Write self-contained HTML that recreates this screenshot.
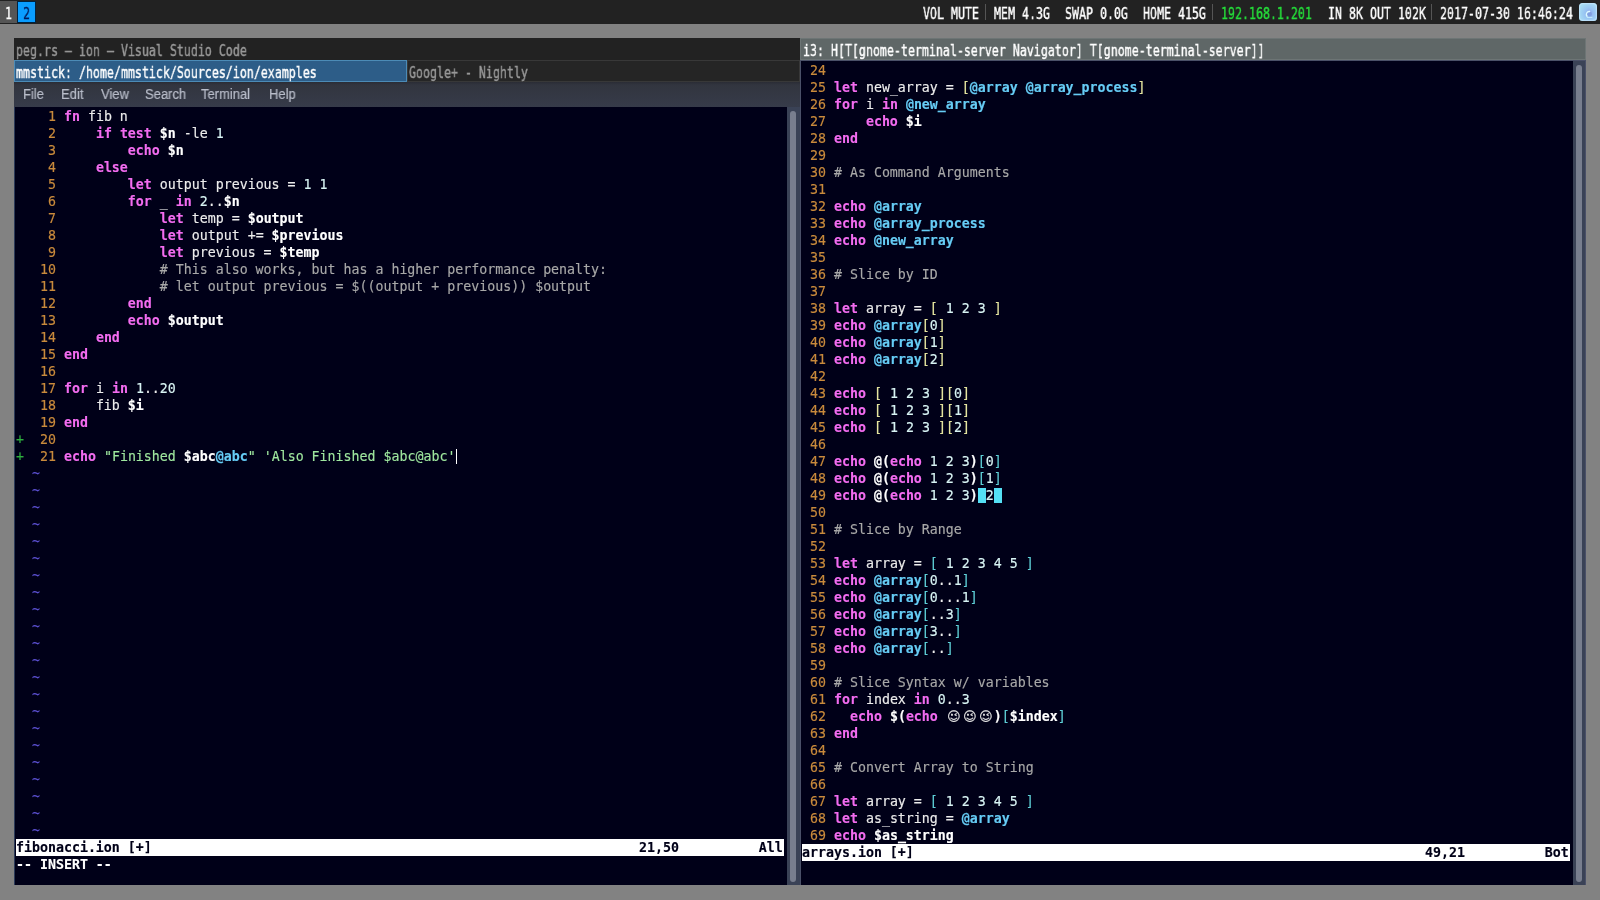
<!DOCTYPE html>
<html><head><meta charset="utf-8"><title>i3</title>
<style>
*{margin:0;padding:0;box-sizing:border-box}
html,body{width:1600px;height:900px;overflow:hidden;background:#828282}
body{position:relative;font-family:"Liberation Mono","DejaVu Sans Mono",monospace}
.abs{position:absolute}
#bar{position:absolute;left:0;top:0;width:1600px;height:24px;background:#222}
.ws{position:absolute;top:1px;height:22px;font-family:"DejaVu Sans Mono","Liberation Mono",monospace;font-size:15.09px;line-height:26px;text-align:center;-webkit-text-stroke:.4px currentColor}
.ws span{display:inline-block;transform:scaleX(.7705);will-change:transform}
#ws1{left:0;width:17px;background:#555;color:#fff}
#ws2{left:17px;width:19px;background:#0a9dff;color:#001a5a;border:1px solid #00223f}
#ws2{line-height:24px}
.bt,.tt{position:absolute;white-space:pre;font-family:"DejaVu Sans Mono","Liberation Mono",monospace;font-size:15.09px;transform-origin:0 50%;transform:scaleX(.7705);-webkit-text-stroke:.4px currentColor;will-change:transform}
.bt{height:24px;line-height:29px}
.tt{height:22px;line-height:26px}
.sep{position:absolute;top:4px;width:1px;height:16px;background:#555}
#tray{position:absolute;left:1579px;top:3px;width:18px;height:18px}
.title{position:absolute;height:22px}
.term{position:absolute;background:#000018;overflow:hidden;will-change:transform;-webkit-text-stroke:.15px currentColor;font-family:"DejaVu Sans Mono","Liberation Mono",monospace;font-size:13.288px;color:#ececec}
.r{position:absolute;left:0;height:17px;line-height:17px;white-space:pre}
#lt .r{left:2px}
#lt{box-shadow:inset 1px 0 #2b3a58}
#rt .r{left:1px}
.k{color:#f36cf0;font-weight:bold}
.v{color:#fff;font-weight:bold}
.a{color:#66ccf5;font-weight:bold}
.c{color:#a8a8a8}
.s{color:#9fe89f}
.n{color:#d8f4f4}
.y{color:#e6e6a0}
.t{color:#5fd0d8}
.ln{color:#c98a3c}
.sg{color:#2fae3f}
.tl{color:#5a4fcf}
.st{background:#fff;color:#000018;font-weight:bold}
.mp{background:#55e0f5;color:#55e0f5}
.em{display:inline-block;width:16px;text-align:center;font-family:"DejaVu Sans",sans-serif;font-size:13px;color:#e6e6e6;vertical-align:top;height:17px;line-height:17px;overflow:hidden}
.cur{position:absolute;width:1px;height:15px;background:#fff}
.sb{position:absolute;background:#3a4256}
.sb i{position:absolute;left:3px;width:6px;top:4px;bottom:3px;background:#787e8e;border-radius:3px}
.menu{position:absolute;left:14px;top:82px;width:786px;height:25px;background:linear-gradient(#2a2c35 0,#32353f 3px,#363b4a 100%);font-family:"Liberation Sans","DejaVu Sans",sans-serif;font-size:13px;color:#b9bdca}
.menu span{position:absolute;top:0;line-height:25px;font-size:13.8px;transform:scaleX(.94);transform-origin:0 50%;will-change:transform;-webkit-text-stroke:.2px currentColor}
</style></head><body>
<div id="bar">
<div class="ws" id="ws1"><span>1</span></div>
<div class="ws" id="ws2"><span>2</span></div>
<div class="bt" style="left:923px;top:0px;color:#fff">VOL MUTE</div>
<div class="bt" style="left:994px;top:0px;color:#fff">MEM 4.3G</div>
<div class="bt" style="left:1065px;top:0px;color:#fff">SWAP 0.0G</div>
<div class="bt" style="left:1143px;top:0px;color:#fff">HOME 415G</div>
<div class="bt" style="left:1221px;top:0px;color:#25de3a">192.168.1.201</div>
<div class="bt" style="left:1328px;top:0px;color:#fff">IN 8K OUT 102K</div>
<div class="bt" style="left:1440px;top:0px;color:#fff">2017-07-30 16:46:24</div>
<div class="sep" style="left:985px"></div>
<div class="sep" style="left:1212px"></div>
<div class="sep" style="left:1431px"></div>
<div id="tray"><svg width="18" height="18" viewBox="0 0 18 18"><defs><radialGradient id="tg" cx="0.58" cy="0.58" r="0.6"><stop offset="0" stop-color="#8ea8ea"/><stop offset=".45" stop-color="#98c4f2"/><stop offset="1" stop-color="#a6dcf4"/></radialGradient></defs><rect x="0" y="0" width="18" height="18" rx="3.5" fill="url(#tg)"/><rect x=".6" y=".6" width="16.8" height="16.8" rx="3" fill="none" stroke="#cdeaff" stroke-opacity=".55" stroke-width="1.2"/><path d="M9.3 5.6L12.6 9.4L9.6 9.6z" fill="#9fb4f2" fill-opacity=".7"/><circle cx="10.4" cy="10.9" r="2.5" fill="#7f9cde" fill-opacity=".85"/><path d="M10.6 8.5A2.9 2.9 0 0 0 8 13.2" fill="none" stroke="#dcfaff" stroke-width="1.4" stroke-linecap="round"/><path d="M8.2 14.4h4.8" stroke="#c4ecfc" stroke-width="1" stroke-linecap="round"/></svg></div>
</div>

<!-- left window -->
<div class="title" style="left:14px;top:38px;width:786px;background:#222"></div>
<div class="tt" style="left:16px;top:38px;color:#999">peg.rs — ion — Visual Studio Code</div>
<div class="title" style="left:14px;top:60px;width:393px;background:#2d5d88;border:1px solid #4c8bb6"></div>
<div class="tt" style="left:16px;top:60px;color:#fff">mmstick: /home/mmstick/Sources/ion/examples</div>
<div class="title" style="left:407px;top:60px;width:393px;background:#252525;border:1px solid #383838"></div>
<div class="tt" style="left:409px;top:60px;color:#999">Google+ - Nightly</div>
<div class="menu"><span style="left:9px">File</span><span style="left:46.5px">Edit</span><span style="left:86.5px">View</span><span style="left:130.5px">Search</span><span style="left:186.5px">Terminal</span><span style="left:254.5px">Help</span></div>
<div class="term" id="lt" style="left:14px;top:107px;width:773px;height:778px">
<div class="r " style="top:1px;">  <span class="ln">  1</span> <span class="k">fn</span> fib n</div>
<div class="r " style="top:18px;">  <span class="ln">  2</span>     <span class="k">if</span> <span class="k">test</span> <span class="v">$n</span> -le <span class="n">1</span></div>
<div class="r " style="top:35px;">  <span class="ln">  3</span>         <span class="k">echo</span> <span class="v">$n</span></div>
<div class="r " style="top:52px;">  <span class="ln">  4</span>     <span class="k">else</span></div>
<div class="r " style="top:69px;">  <span class="ln">  5</span>         <span class="k">let</span> output previous = <span class="n">1</span> <span class="n">1</span></div>
<div class="r " style="top:86px;">  <span class="ln">  6</span>         <span class="k">for</span> _ <span class="k">in</span> <span class="n">2</span>..<span class="v">$n</span></div>
<div class="r " style="top:103px;">  <span class="ln">  7</span>             <span class="k">let</span> temp = <span class="v">$output</span></div>
<div class="r " style="top:120px;">  <span class="ln">  8</span>             <span class="k">let</span> output += <span class="v">$previous</span></div>
<div class="r " style="top:137px;">  <span class="ln">  9</span>             <span class="k">let</span> previous = <span class="v">$temp</span></div>
<div class="r " style="top:154px;">  <span class="ln"> 10</span>             <span class="c"># This also works, but has a higher performance penalty:</span></div>
<div class="r " style="top:171px;">  <span class="ln"> 11</span>             <span class="c"># let output previous = $((output + previous)) $output</span></div>
<div class="r " style="top:188px;">  <span class="ln"> 12</span>         <span class="k">end</span></div>
<div class="r " style="top:205px;">  <span class="ln"> 13</span>         <span class="k">echo</span> <span class="v">$output</span></div>
<div class="r " style="top:222px;">  <span class="ln"> 14</span>     <span class="k">end</span></div>
<div class="r " style="top:239px;">  <span class="ln"> 15</span> <span class="k">end</span></div>
<div class="r " style="top:256px;">  <span class="ln"> 16</span> </div>
<div class="r " style="top:273px;">  <span class="ln"> 17</span> <span class="k">for</span> i <span class="k">in</span> <span class="n">1</span>..<span class="n">20</span></div>
<div class="r " style="top:290px;">  <span class="ln"> 18</span>     fib <span class="v">$i</span></div>
<div class="r " style="top:307px;">  <span class="ln"> 19</span> <span class="k">end</span></div>
<div class="r " style="top:324px;"><span class="sg">+</span> <span class="ln"> 20</span> </div>
<div class="r " style="top:341px;"><span class="sg">+</span> <span class="ln"> 21</span> <span class="k">echo</span> <span class="s">"Finished </span><span class="v">$abc</span><span class="a">@abc</span><span class="s">"</span> <span class="s">'Also Finished $abc@abc'</span></div>
<div class="r " style="top:358px;">  <span class="tl">~</span></div>
<div class="r " style="top:375px;">  <span class="tl">~</span></div>
<div class="r " style="top:392px;">  <span class="tl">~</span></div>
<div class="r " style="top:409px;">  <span class="tl">~</span></div>
<div class="r " style="top:426px;">  <span class="tl">~</span></div>
<div class="r " style="top:443px;">  <span class="tl">~</span></div>
<div class="r " style="top:460px;">  <span class="tl">~</span></div>
<div class="r " style="top:477px;">  <span class="tl">~</span></div>
<div class="r " style="top:494px;">  <span class="tl">~</span></div>
<div class="r " style="top:511px;">  <span class="tl">~</span></div>
<div class="r " style="top:528px;">  <span class="tl">~</span></div>
<div class="r " style="top:545px;">  <span class="tl">~</span></div>
<div class="r " style="top:562px;">  <span class="tl">~</span></div>
<div class="r " style="top:579px;">  <span class="tl">~</span></div>
<div class="r " style="top:596px;">  <span class="tl">~</span></div>
<div class="r " style="top:613px;">  <span class="tl">~</span></div>
<div class="r " style="top:630px;">  <span class="tl">~</span></div>
<div class="r " style="top:647px;">  <span class="tl">~</span></div>
<div class="r " style="top:664px;">  <span class="tl">~</span></div>
<div class="r " style="top:681px;">  <span class="tl">~</span></div>
<div class="r " style="top:698px;">  <span class="tl">~</span></div>
<div class="r " style="top:715px;">  <span class="tl">~</span></div>
<div class="r st" style="top:732px;width:768px">fibonacci.ion [+]                                                             21,50          All</div>
<div class="r " style="top:749px;"><span class="v">-- INSERT --</span></div>
<div class="cur" style="left:442px;top:342px"></div>
</div>
<div class="sb" style="left:787px;top:107px;width:13px;height:778px"><i></i></div>

<!-- right window -->
<div class="title" style="left:800px;top:38px;width:786px;background:#5f6767;border:1px solid #6d7575"></div>
<div class="tt" style="left:803px;top:38px;color:#fff">i3: H[T[gnome-terminal-server Navigator] T[gnome-terminal-server]]</div>
<div class="abs" style="left:800px;top:60px;width:786px;height:825px;background:#4a5068"></div>
<div class="term" id="rt" style="left:801px;top:61px;width:772px;height:824px">
<div class="r " style="top:1px;"><span class="ln"> 24</span> </div>
<div class="r " style="top:18px;"><span class="ln"> 25</span> <span class="k">let</span> new_array = <span class="y">[</span><span class="a">@array</span> <span class="a">@array_process</span><span class="y">]</span></div>
<div class="r " style="top:35px;"><span class="ln"> 26</span> <span class="k">for</span> i <span class="k">in</span> <span class="a">@new_array</span></div>
<div class="r " style="top:52px;"><span class="ln"> 27</span>     <span class="k">echo</span> <span class="v">$i</span></div>
<div class="r " style="top:69px;"><span class="ln"> 28</span> <span class="k">end</span></div>
<div class="r " style="top:86px;"><span class="ln"> 29</span> </div>
<div class="r " style="top:103px;"><span class="ln"> 30</span> <span class="c"># As Command Arguments</span></div>
<div class="r " style="top:120px;"><span class="ln"> 31</span> </div>
<div class="r " style="top:137px;"><span class="ln"> 32</span> <span class="k">echo</span> <span class="a">@array</span></div>
<div class="r " style="top:154px;"><span class="ln"> 33</span> <span class="k">echo</span> <span class="a">@array_process</span></div>
<div class="r " style="top:171px;"><span class="ln"> 34</span> <span class="k">echo</span> <span class="a">@new_array</span></div>
<div class="r " style="top:188px;"><span class="ln"> 35</span> </div>
<div class="r " style="top:205px;"><span class="ln"> 36</span> <span class="c"># Slice by ID</span></div>
<div class="r " style="top:222px;"><span class="ln"> 37</span> </div>
<div class="r " style="top:239px;"><span class="ln"> 38</span> <span class="k">let</span> array = <span class="y">[</span> <span class="n">1</span> <span class="n">2</span> <span class="n">3</span> <span class="y">]</span></div>
<div class="r " style="top:256px;"><span class="ln"> 39</span> <span class="k">echo</span> <span class="a">@array</span><span class="y">[</span><span class="n">0</span><span class="y">]</span></div>
<div class="r " style="top:273px;"><span class="ln"> 40</span> <span class="k">echo</span> <span class="a">@array</span><span class="y">[</span><span class="n">1</span><span class="y">]</span></div>
<div class="r " style="top:290px;"><span class="ln"> 41</span> <span class="k">echo</span> <span class="a">@array</span><span class="y">[</span><span class="n">2</span><span class="y">]</span></div>
<div class="r " style="top:307px;"><span class="ln"> 42</span> </div>
<div class="r " style="top:324px;"><span class="ln"> 43</span> <span class="k">echo</span> <span class="y">[</span> <span class="n">1</span> <span class="n">2</span> <span class="n">3</span> <span class="y">][</span><span class="n">0</span><span class="y">]</span></div>
<div class="r " style="top:341px;"><span class="ln"> 44</span> <span class="k">echo</span> <span class="y">[</span> <span class="n">1</span> <span class="n">2</span> <span class="n">3</span> <span class="y">][</span><span class="n">1</span><span class="y">]</span></div>
<div class="r " style="top:358px;"><span class="ln"> 45</span> <span class="k">echo</span> <span class="y">[</span> <span class="n">1</span> <span class="n">2</span> <span class="n">3</span> <span class="y">][</span><span class="n">2</span><span class="y">]</span></div>
<div class="r " style="top:375px;"><span class="ln"> 46</span> </div>
<div class="r " style="top:392px;"><span class="ln"> 47</span> <span class="k">echo</span> <span class="v">@(</span><span class="k">echo</span> <span class="n">1</span> <span class="n">2</span> <span class="n">3</span><span class="v">)</span><span class="t">[</span><span class="n">0</span><span class="t">]</span></div>
<div class="r " style="top:409px;"><span class="ln"> 48</span> <span class="k">echo</span> <span class="v">@(</span><span class="k">echo</span> <span class="n">1</span> <span class="n">2</span> <span class="n">3</span><span class="v">)</span><span class="t">[</span><span class="n">1</span><span class="t">]</span></div>
<div class="r " style="top:426px;"><span class="ln"> 49</span> <span class="k">echo</span> <span class="v">@(</span><span class="k">echo</span> <span class="n">1</span> <span class="n">2</span> <span class="n">3</span><span class="v">)</span><span class="mp">[</span><span class="n">2</span><span class="mp">]</span></div>
<div class="r " style="top:443px;"><span class="ln"> 50</span> </div>
<div class="r " style="top:460px;"><span class="ln"> 51</span> <span class="c"># Slice by Range</span></div>
<div class="r " style="top:477px;"><span class="ln"> 52</span> </div>
<div class="r " style="top:494px;"><span class="ln"> 53</span> <span class="k">let</span> array = <span class="t">[</span> <span class="n">1</span> <span class="n">2</span> <span class="n">3</span> <span class="n">4</span> <span class="n">5</span> <span class="t">]</span></div>
<div class="r " style="top:511px;"><span class="ln"> 54</span> <span class="k">echo</span> <span class="a">@array</span><span class="t">[</span><span class="n">0</span>..<span class="n">1</span><span class="t">]</span></div>
<div class="r " style="top:528px;"><span class="ln"> 55</span> <span class="k">echo</span> <span class="a">@array</span><span class="t">[</span><span class="n">0</span>...<span class="n">1</span><span class="t">]</span></div>
<div class="r " style="top:545px;"><span class="ln"> 56</span> <span class="k">echo</span> <span class="a">@array</span><span class="t">[</span>..<span class="n">3</span><span class="t">]</span></div>
<div class="r " style="top:562px;"><span class="ln"> 57</span> <span class="k">echo</span> <span class="a">@array</span><span class="t">[</span><span class="n">3</span>..<span class="t">]</span></div>
<div class="r " style="top:579px;"><span class="ln"> 58</span> <span class="k">echo</span> <span class="a">@array</span><span class="t">[</span>..<span class="t">]</span></div>
<div class="r " style="top:596px;"><span class="ln"> 59</span> </div>
<div class="r " style="top:613px;"><span class="ln"> 60</span> <span class="c"># Slice Syntax w/ variables</span></div>
<div class="r " style="top:630px;"><span class="ln"> 61</span> <span class="k">for</span> index <span class="k">in</span> <span class="n">0</span>..<span class="n">3</span></div>
<div class="r " style="top:647px;"><span class="ln"> 62</span>   <span class="k">echo</span> <span class="v">$(</span><span class="k">echo</span> <span class="em">😉</span><span class="em">😉</span><span class="em">😉</span><span class="v">)</span><span class="t">[</span><span class="v">$index</span><span class="t">]</span></div>
<div class="r " style="top:664px;"><span class="ln"> 63</span> <span class="k">end</span></div>
<div class="r " style="top:681px;"><span class="ln"> 64</span> </div>
<div class="r " style="top:698px;"><span class="ln"> 65</span> <span class="c"># Convert Array to String</span></div>
<div class="r " style="top:715px;"><span class="ln"> 66</span> </div>
<div class="r " style="top:732px;"><span class="ln"> 67</span> <span class="k">let</span> array = <span class="t">[</span> <span class="n">1</span> <span class="n">2</span> <span class="n">3</span> <span class="n">4</span> <span class="n">5</span> <span class="t">]</span></div>
<div class="r " style="top:749px;"><span class="ln"> 68</span> <span class="k">let</span> as_string = <span class="a">@array</span></div>
<div class="r " style="top:766px;"><span class="ln"> 69</span> <span class="k">echo</span> <span class="v">$as_string</span></div>
<div class="r st" style="top:783px;width:768px">arrays.ion [+]                                                                49,21          Bot</div>
</div>
<div class="sb" style="left:1573px;top:61px;width:12px;height:824px"><i></i></div>
</body></html>
